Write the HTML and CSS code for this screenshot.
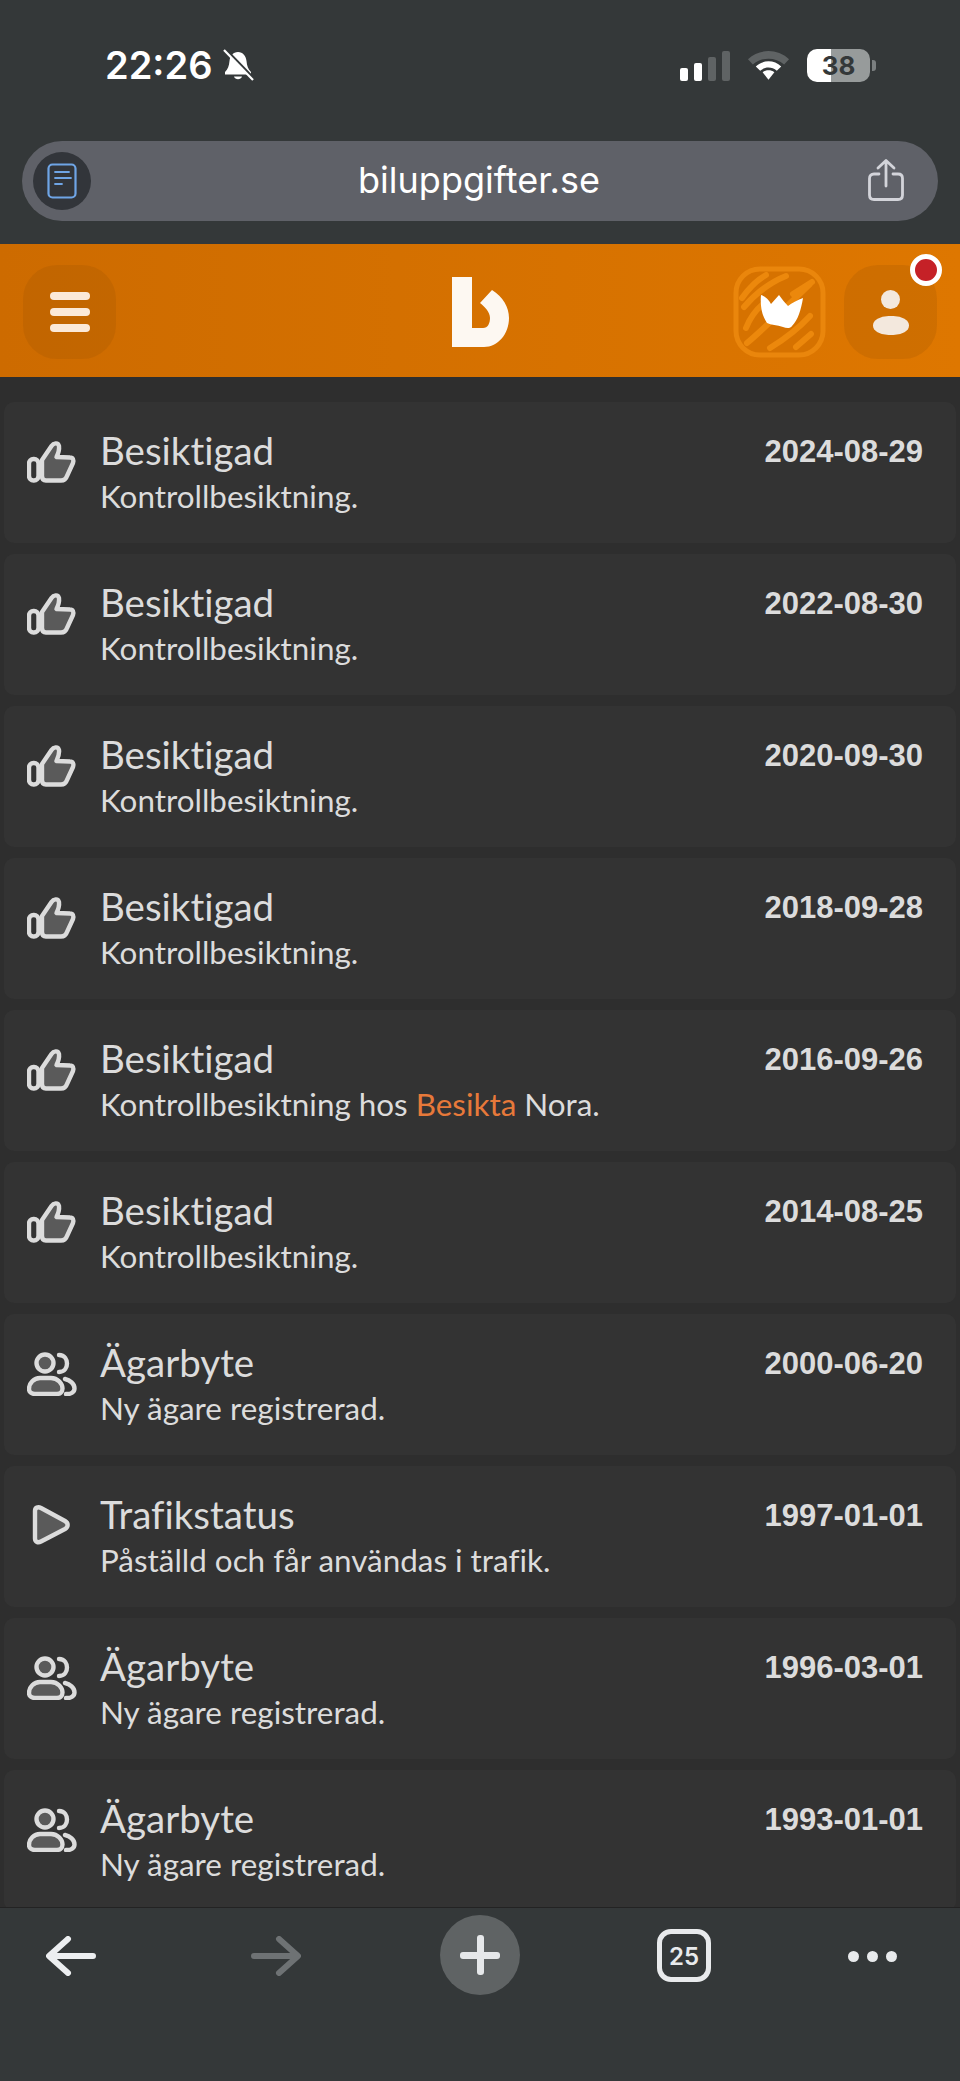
FILE: index.html
```html
<!DOCTYPE html>
<html lang="sv">

<head>
  <meta charset="UTF-8" />
  <meta name="viewport" content="width=device-width, initial-scale=1.0" />
  <title>biluppgifter.se</title>
  <link rel="stylesheet" href="styles.css">
</head>

<body>
  <svg class="sprites" width="0" height="0">
    <symbol id="thumb" viewBox="0 0 50 44">
      <path d="M15 20 L24.500 6 C26.500 3 31 2 32 6 C32.500 10 31 14 29.500 17 L43 17.500 C46 17.500 47 20 46 23 L40 36 C39 39 37 40.500 34 40.500 L19 40.500 C16.500 40.500 15 39 15 36 Z" fill="#5a5a5a" stroke="#dcdcdc" stroke-width="4.400" stroke-linejoin="round" />
      <rect x="2" y="19" width="9.500" height="21.500" rx="4.500" fill="none" stroke="#dcdcdc" stroke-width="4.400" />
    </symbol>
    <symbol id="people" viewBox="0 0 50 44">
      <circle cx="18" cy="11" r="8.500" fill="#5a5a5a" stroke="#dcdcdc" stroke-width="4.400" />
      <path d="M13 26 H24 C31 26 35.500 32 35.500 36.500 C35.500 40 33 42 30 42 H8 C4.500 42 2 40 2 37 C2 31 7 26 13 26 Z" fill="#5a5a5a" stroke="#dcdcdc" stroke-width="4.400" />
      <path d="M32 3 C38 3 40 8 40 11.500 C40 15 38 20 32 20" fill="none" stroke="#dcdcdc" stroke-width="4.400" stroke-linecap="round" />
      <path d="M38 27 C43 28 47.500 32 47.500 36.500 C47.500 40 44 42.500 39 42" fill="none" stroke="#dcdcdc" stroke-width="4.400" stroke-linecap="round" />
    </symbol>
    <symbol id="play" viewBox="0 0 50 44">
      <path d="M8 7 C8 3.500 11 2.500 14 4 L38 17 C41.500 19 41.500 23 38 25 L14 37.500 C11 39 8 38 8 34.500 Z" fill="#5a5a5a" stroke="#dcdcdc" stroke-width="4.400" stroke-linejoin="round" />
    </symbol>
  </svg>

  <div class="browser-top">
    <div class="status-bar">
      <div class="status-left">
        <span class="clock">22:26</span>
        <svg class="bell" viewBox="0 0 32 32" width="32" height="32">
          <path d="M16 3 C21 3 24 7 24.500 12 C25 17 26 20 29 23 L29 25.500 L3 25.500 L3 23 C6 20 7 17 7.500 12 C8 7 11 3 16 3 Z" fill="#fff" />
          <path d="M12 27.500 C13 31 19 31 20 27.500 Z" fill="#fff" />
          <path d="M4 1 L32 30" stroke="#343839" stroke-width="3" />
          <path d="M2 1 L31 31" stroke="#fff" stroke-width="2.200" />
        </svg>
      </div>
      <div class="status-right">
        <div class="signal">
          <span class="on s1"></span><span class="on s2"></span><span class="s3"></span><span class="s4"></span>
        </div>
        <svg class="wifi" viewBox="0 0 44 32" width="43" height="32">
          <path d="M1 10 C13 -1 31 -1 43 10 L38 15.500 C29 7.500 15 7.500 6 15.500 Z" fill="#5f6364" />
          <path d="M9 17.500 C16 10.500 28 10.500 35 17.500 L30.500 22 C25.500 17.500 18.500 17.500 13.500 22 Z" fill="#fff" />
          <path d="M16 23.500 C19.500 20.800 24.500 20.800 28 23.500 L22 31 Z" fill="#fff" />
        </svg>
        <div class="battery"><span class="battery-level">38</span></div>
      </div>
    </div>

    <div class="address-bar">
      <span class="doc-badge">
        <svg viewBox="0 0 30 36" width="30" height="36">
          <rect x="1.500" y="1.500" width="27" height="33" rx="4" fill="none" stroke="#6fa5e6" stroke-width="2.200" />
          <path d="M8 9 H22 M8 15 H24 M8 21 H15" stroke="#6fa5e6" stroke-width="1.800" stroke-linecap="round" />
        </svg>
      </span>
      <span class="address-text">biluppgifter.se</span>
      <svg class="share" viewBox="0 0 38 44" width="38" height="44">
        <path d="M19 28 V3 M11 10 L19 2.500 L27 10" fill="none" stroke="#d3d4da" stroke-width="2.800" stroke-linecap="round" stroke-linejoin="round" />
        <path d="M12 16 H7 C4 16 2.500 17.500 2.500 20.500 V37 C2.500 40 4 41.500 7 41.500 H31 C34 41.500 35.500 40 35.500 37 V20.500 C35.500 17.500 34 16 31 16 H26" fill="none" stroke="#d3d4da" stroke-width="2.800" stroke-linecap="round" />
      </svg>
    </div>
  </div>

  <header class="site-header">
    <div class="square-btn menu-btn">
      <span></span><span></span><span></span>
    </div>
    <svg class="logo" viewBox="0 0 60 72" width="60" height="72">
      <path d="M1 0 H21 V51 H32 C37 51 39 46 39 41 C39 35 34 30 29 26 L41 13 C52 20 58 30 58 41 C58 57 47 70 33 70 H1 Z" fill="#fdf8f2" />
    </svg>
    <div class="header-right">
      <div class="crown-btn">
        <svg viewBox="0 0 93 92" width="93" height="92">
          <rect x="3" y="3" width="87" height="86" rx="24" fill="#d67200" stroke="#ea860c" stroke-width="5" />
          <path d="M9 32 C16 22 24 14 33 9 M11 41 C24 26 38 16 53 10 M13 62 C17 52 24 43 30 38 M14 77 C32 62 56 38 77 18 M60 28 L79 16 M37 82 C50 74 66 62 77 50 M63 81 L78 68" fill="none" stroke="#ec880c" stroke-width="6" stroke-linecap="round" />
          <path d="M28 29 C32 30 36 34 38 38 L46 29 C49 33 52 37 55 40 C59 37 64 34 70 32 C68 44 65 54 59 60 C57 63 53 62 50 61 C44 59 38 59 34 57 C29 50 27 40 28 29 Z" fill="#fff" />
        </svg>
      </div>
      <div class="square-btn user-btn">
        <span class="user-head"></span>
        <span class="user-body"></span>
        <span class="notify-dot"></span>
      </div>
    </div>
  </header>

  <main class="history">
    <div class="event">
      <svg class="event-icon"><use href="#thumb" /></svg>
      <div class="event-text">
        <div class="event-title">Besiktigad</div>
        <div class="event-desc">Kontrollbesiktning.</div>
      </div>
      <div class="event-date">2024-08-29</div>
    </div>
    <div class="event">
      <svg class="event-icon"><use href="#thumb" /></svg>
      <div class="event-text">
        <div class="event-title">Besiktigad</div>
        <div class="event-desc">Kontrollbesiktning.</div>
      </div>
      <div class="event-date">2022-08-30</div>
    </div>
    <div class="event">
      <svg class="event-icon"><use href="#thumb" /></svg>
      <div class="event-text">
        <div class="event-title">Besiktigad</div>
        <div class="event-desc">Kontrollbesiktning.</div>
      </div>
      <div class="event-date">2020-09-30</div>
    </div>
    <div class="event">
      <svg class="event-icon"><use href="#thumb" /></svg>
      <div class="event-text">
        <div class="event-title">Besiktigad</div>
        <div class="event-desc">Kontrollbesiktning.</div>
      </div>
      <div class="event-date">2018-09-28</div>
    </div>
    <div class="event">
      <svg class="event-icon"><use href="#thumb" /></svg>
      <div class="event-text">
        <div class="event-title">Besiktigad</div>
        <div class="event-desc">Kontrollbesiktning hos <a class="event-link">Besikta</a> Nora.</div>
      </div>
      <div class="event-date">2016-09-26</div>
    </div>
    <div class="event">
      <svg class="event-icon"><use href="#thumb" /></svg>
      <div class="event-text">
        <div class="event-title">Besiktigad</div>
        <div class="event-desc">Kontrollbesiktning.</div>
      </div>
      <div class="event-date">2014-08-25</div>
    </div>
    <div class="event">
      <svg class="event-icon"><use href="#people" /></svg>
      <div class="event-text">
        <div class="event-title">Ägarbyte</div>
        <div class="event-desc">Ny ägare registrerad.</div>
      </div>
      <div class="event-date">2000-06-20</div>
    </div>
    <div class="event">
      <svg class="event-icon"><use href="#play" /></svg>
      <div class="event-text">
        <div class="event-title">Trafikstatus</div>
        <div class="event-desc">Påställd och får användas i trafik.</div>
      </div>
      <div class="event-date">1997-01-01</div>
    </div>
    <div class="event">
      <svg class="event-icon"><use href="#people" /></svg>
      <div class="event-text">
        <div class="event-title">Ägarbyte</div>
        <div class="event-desc">Ny ägare registrerad.</div>
      </div>
      <div class="event-date">1996-03-01</div>
    </div>
    <div class="event">
      <svg class="event-icon"><use href="#people" /></svg>
      <div class="event-text">
        <div class="event-title">Ägarbyte</div>
        <div class="event-desc">Ny ägare registrerad.</div>
      </div>
      <div class="event-date">1993-01-01</div>
    </div>
  </main>

  <nav class="browser-bottom">
    <svg class="nav-arrow back" viewBox="0 0 50 40" width="50" height="40">
      <path d="M47 20 H3.500 M22 3 L3 20 L22 37" fill="none" stroke="#eceef0" stroke-width="6" stroke-linecap="round" stroke-linejoin="round" />
    </svg>
    <svg class="nav-arrow forward" viewBox="0 0 50 40" width="50" height="40">
      <path d="M3 20 H46.500 M28 3 L47 20 L28 37" fill="none" stroke="#6e7274" stroke-width="6" stroke-linecap="round" stroke-linejoin="round" />
    </svg>
    <div class="new-tab"><span class="plus"></span></div>
    <div class="tab-count">25</div>
    <div class="more"><span></span><span></span><span></span></div>
  </nav>
</body>

</html>
```

FILE: styles.css
```css
* {
  margin: 0;
  padding: 0;
  box-sizing: border-box;
}

body {
  width: 960px;
  height: 2081px;
  overflow: hidden;
  display: flex;
  flex-direction: column;
  background: #2e2e2e;
  font-family: 'Lato', sans-serif;
}

.sprites {
  position: absolute;
}

/* Browser chrome - top */
.browser-top {
  height: 244px;
  flex-shrink: 0;
  background: #343839;
  padding: 43px 22px 0;
}

.status-bar {
  display: flex;
  justify-content: space-between;
  align-items: center;
  height: 44px;
  margin-bottom: 54px;
}

.status-left {
  display: flex;
  align-items: center;
  gap: 10px;
  padding-left: 83px;
}

.clock {
  color: #fff;
  font-family: 'Inter', sans-serif;
  font-size: 38px;
  font-weight: 600;
}

.status-right {
  display: flex;
  align-items: center;
  gap: 17px;
  padding-right: 68px;
}

.signal {
  display: flex;
  align-items: flex-end;
  gap: 6px;
  height: 32px;
}

.signal span {
  width: 8px;
  border-radius: 2px;
  background: #5f6364;
}

.signal .on {
  background: #fff;
}

.signal .s1 { height: 13px; }
.signal .s2 { height: 18px; }
.signal .s3 { height: 24px; }
.signal .s4 { height: 30px; }

.battery {
  position: relative;
  width: 63px;
  height: 33px;
  border-radius: 10px;
  background: linear-gradient(to right, #fff 0, #fff 38%, #979b9b 38%, #979b9b 100%);
  text-align: center;
}

.battery::after {
  content: "";
  position: absolute;
  top: 11px;
  right: -6px;
  width: 4px;
  height: 11px;
  border-radius: 0 3px 3px 0;
  background: #7b7f80;
}

.battery-level {
  color: #343839;
  font-family: 'Inter', sans-serif;
  font-size: 26px;
  font-weight: 700;
  line-height: 33px;
}

.address-bar {
  display: flex;
  align-items: center;
  justify-content: space-between;
  height: 80px;
  padding: 0 14px 0 11px;
  border-radius: 40px;
  background: #5f6168;
}

.doc-badge {
  display: flex;
  align-items: center;
  justify-content: center;
  width: 58px;
  height: 58px;
  border-radius: 50%;
  background: #32353a;
}

.address-text {
  color: #fff;
  font-family: 'Inter', sans-serif;
  font-size: 36px;
  margin-top: -2px;
}

.share {
  margin-right: 19px;
  margin-top: -2px;
}

/* Site header */
.site-header {
  position: relative;
  height: 133px;
  flex-shrink: 0;
  display: flex;
  align-items: center;
  justify-content: space-between;
  padding: 3px 23px 0;
  background: linear-gradient(to right, #cd6b00, #de7700);
}

.square-btn {
  width: 93px;
  height: 94px;
  border-radius: 34px;
  background: rgba(150, 80, 0, 0.2);
}

.menu-btn {
  display: flex;
  flex-direction: column;
  align-items: center;
  justify-content: center;
  gap: 8px;
}

.menu-btn span {
  width: 40px;
  height: 8px;
  border-radius: 4px;
  background: #fbe9d8;
}

.logo {
  position: absolute;
  left: 451px;
  top: 33px;
}

.header-right {
  display: flex;
  align-items: center;
  gap: 18px;
}

.crown-btn {
  display: flex;
}

.user-btn {
  position: relative;
  display: flex;
  flex-direction: column;
  align-items: center;
  justify-content: center;
  gap: 7px;
}

.user-head {
  width: 19px;
  height: 19px;
  border-radius: 50%;
  background: #f3e8dd;
}

.user-body {
  width: 36px;
  height: 19px;
  border-radius: 18px / 11px;
  background: #f3e8dd;
}

.notify-dot {
  position: absolute;
  top: -11px;
  right: -5px;
  width: 32px;
  height: 32px;
  border: 5px solid #fff;
  border-radius: 50%;
  background: #c52127;
}

/* History list */
.history {
  flex: 1;
  overflow: hidden;
  padding: 25px 4px 0;
}

.event {
  display: flex;
  align-items: flex-start;
  height: 141px;
  margin-bottom: 11px;
  padding: 25px 33px 0 23px;
  border-radius: 10px;
  background: #333333;
}

.event-icon {
  width: 50px;
  height: 44px;
  flex-shrink: 0;
  margin: 13px 23px 0 0;
}

.event-text {
  flex: 1;
  font-variant-ligatures: none;
}

.event-title {
  color: #dcdcdc;
  font-size: 38.500px;
  line-height: 46px;
}

.event-desc {
  color: #dcdcdc;
  font-size: 31.400px;
  line-height: 46px;
}

.event-link {
  color: #e7793a;
}

.event-date {
  margin-top: 2px;
  color: #dcdcdc;
  font-family: 'Liberation Sans', sans-serif;
  font-size: 31px;
  font-weight: 700;
  line-height: 46px;
}

/* Browser chrome - bottom */
.browser-bottom {
  height: 174px;
  flex-shrink: 0;
  display: flex;
  align-items: flex-start;
  gap: 137px;
  padding: 7px 0 0 46px;
  border-top: 1px solid #232323;
  background: #343839;
}

.nav-arrow {
  margin-top: 21px;
}

.nav-arrow.back {
  margin-right: 18px;
}

.nav-arrow.forward {
  margin-right: 2px;
}

.new-tab {
  display: flex;
  align-items: center;
  justify-content: center;
  width: 80px;
  height: 80px;
  border-radius: 50%;
  background: #5f6364;
}

.plus {
  position: relative;
  width: 40px;
  height: 7px;
  border-radius: 3px;
  background: #e6e8ea;
}

.plus::after {
  content: "";
  position: absolute;
  top: -16.500px;
  left: 16.500px;
  width: 7px;
  height: 40px;
  border-radius: 3px;
  background: #e6e8ea;
}

.tab-count {
  width: 54px;
  height: 53px;
  margin-top: 14px;
  border: 5px solid #e8eaec;
  border-radius: 14px;
  color: #e8eaec;
  font-family: 'Inter', sans-serif;
  font-size: 24px;
  font-weight: 600;
  line-height: 45px;
  text-align: center;
}

.more {
  display: flex;
  gap: 8px;
  margin-top: 36px;
}

.more span {
  width: 11px;
  height: 11px;
  border-radius: 50%;
  background: #e8eaec;
}
```
